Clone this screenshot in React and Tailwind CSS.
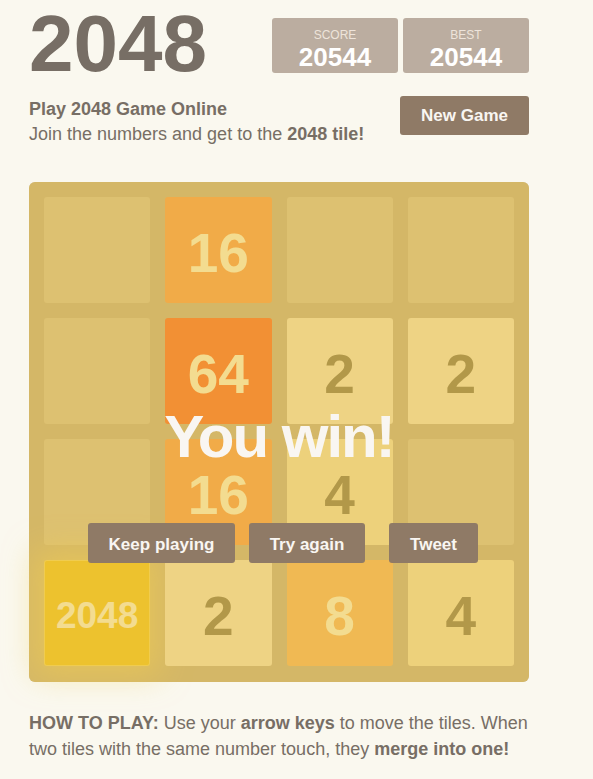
const board = [
  [0, 16, 0, 0],
  [0, 64, 2, 2],
  [0, 16, 4, 0],
  [2048, 2, 8, 4],
]

const tileStyles = {
  2: 'bg-[#eee4da] text-[#776e65] text-[55px]',
  4: 'bg-[#ede0c8] text-[#776e65] text-[55px]',
  8: 'bg-[#f2b179] text-[#f9f6f2] text-[55px]',
  16: 'bg-[#f59563] text-[#f9f6f2] text-[55px]',
  64: 'bg-[#f65e3b] text-[#f9f6f2] text-[55px]',
  2048: 'bg-[#edc22e] text-[#f9f6f2] text-[37px] shadow-[0_0_30px_10px_rgba(243,215,116,0.55556),inset_0_0_0_1px_rgba(255,255,255,0.33333)]',
}

function Tile({ value }) {
  if (!value) {
    return <div className="h-[106px] rounded-[3px] bg-[rgba(238,228,218,0.35)]" />
  }
  return (
    <div className={`h-[106px] pt-[6px] rounded-[3px] flex items-center justify-center font-bold ${tileStyles[value]}`}>
      {value}
    </div>
  )
}

function ScoreBox({ label, value }) {
  return (
    <div className="w-[126px] h-[55px] bg-[#bbada0] rounded-[3px] flex flex-col items-center pt-[10px]">
      <span className="text-[12px] leading-[14px] uppercase text-[#eee4da]">{label}</span>
      <span className="text-[26px] leading-[28px] font-bold text-white mt-[1px]">{value}</span>
    </div>
  )
}

function App() {
  return (
    <div className="min-h-screen bg-[#faf8ef] font-['Liberation_Sans',sans-serif] text-[#776e65]">
      <div className="w-[500px] ml-[29px] pt-[4px] pb-[20px]">
        <div className="flex justify-between items-start">
          <h1 className="text-[80px] leading-[80px] font-bold">2048</h1>
          <div className="flex gap-[5px] mt-[14px]">
            <ScoreBox label="Score" value="20544" />
            <ScoreBox label="Best" value="20544" />
          </div>
        </div>

        <div className="flex justify-between items-start mt-[12px]">
          <div className="text-[18px] leading-[25px] pt-[1px]">
            <p className="font-bold">Play 2048 Game Online</p>
            <p>
              Join the numbers and get to the <strong>2048 tile!</strong>
            </p>
          </div>
          <button className="w-[129px] h-[39px] bg-[#8f7a66] rounded-[3px] text-[17px] font-bold text-[#f9f6f2]">
            New Game
          </button>
        </div>

        <div className="relative mt-[35px] w-[500px] h-[500px] bg-[#bbada0] rounded-[6px] p-[15px]">
          <div className="grid grid-cols-4 gap-[15px]">
            {board.flat().map((v, i) => (
              <Tile key={i} value={v} />
            ))}
          </div>
          <div className="absolute inset-0 rounded-[6px] bg-[rgba(237,194,46,0.5)] flex flex-col items-center">
            <p className="mt-[225px] text-[60px] leading-[60px] font-bold tracking-[-2px] text-[#f9f6f2]">You win!</p>
            <div className="flex mt-[56px] text-[17px] font-bold text-[#f9f6f2] pl-[8px]">
              <button className="h-[40px] pt-[3px] w-[147px] bg-[#8f7a66] rounded-[3px]">Keep playing</button>
              <button className="h-[40px] pt-[3px] w-[116px] bg-[#8f7a66] rounded-[3px] ml-[14px]">Try again</button>
              <button className="h-[40px] pt-[3px] w-[89px] bg-[#8f7a66] rounded-[3px] ml-[24px]">Tweet</button>
            </div>
          </div>
        </div>

        <p className="mt-[28px] text-[18px] leading-[26px] whitespace-nowrap">
          <strong>HOW TO PLAY:</strong> Use your <strong>arrow keys</strong> to move the tiles. When
          <br />
          two tiles with the same number touch, they <strong>merge into one!</strong>
        </p>
      </div>
    </div>
  )
}

export default App
